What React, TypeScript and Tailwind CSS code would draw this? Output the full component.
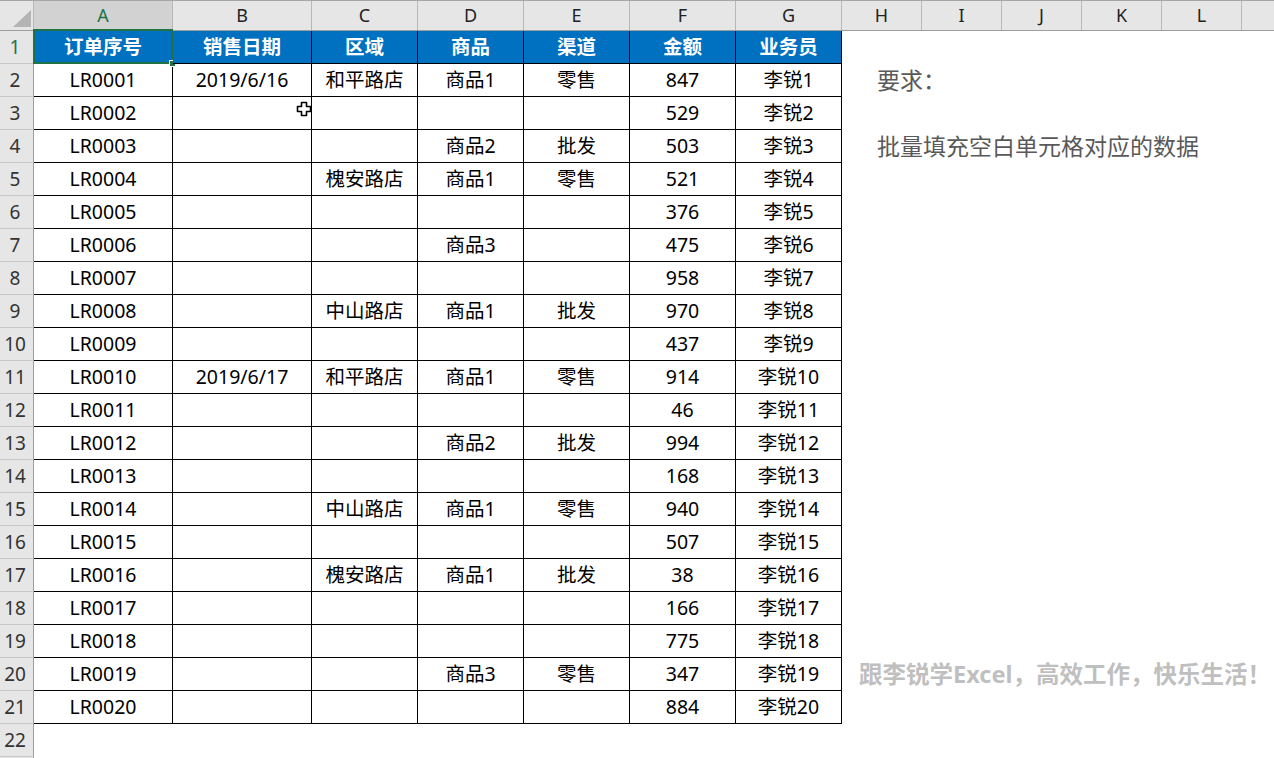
import React from "react";

const FONT = { fontFamily: '"Noto Sans", "Noto Sans CJK SC", sans-serif' };

const widths = [139, 139, 106, 106, 106, 106, 106, 80, 80, 80, 80, 80, 40];
const letters = ["A", "B", "C", "D", "E", "F", "G", "H", "I", "J", "K", "L", ""];

const headers = ["订单序号", "销售日期", "区域", "商品", "渠道", "金额", "业务员"];

const data: string[][] = [
  ["LR0001", "2019/6/16", "和平路店", "商品1", "零售", "847", "李锐1"],
  ["LR0002", "", "", "", "", "529", "李锐2"],
  ["LR0003", "", "", "商品2", "批发", "503", "李锐3"],
  ["LR0004", "", "槐安路店", "商品1", "零售", "521", "李锐4"],
  ["LR0005", "", "", "", "", "376", "李锐5"],
  ["LR0006", "", "", "商品3", "", "475", "李锐6"],
  ["LR0007", "", "", "", "", "958", "李锐7"],
  ["LR0008", "", "中山路店", "商品1", "批发", "970", "李锐8"],
  ["LR0009", "", "", "", "", "437", "李锐9"],
  ["LR0010", "2019/6/17", "和平路店", "商品1", "零售", "914", "李锐10"],
  ["LR0011", "", "", "", "", "46", "李锐11"],
  ["LR0012", "", "", "商品2", "批发", "994", "李锐12"],
  ["LR0013", "", "", "", "", "168", "李锐13"],
  ["LR0014", "", "中山路店", "商品1", "零售", "940", "李锐14"],
  ["LR0015", "", "", "", "", "507", "李锐15"],
  ["LR0016", "", "槐安路店", "商品1", "批发", "38", "李锐16"],
  ["LR0017", "", "", "", "", "166", "李锐17"],
  ["LR0018", "", "", "", "", "775", "李锐18"],
  ["LR0019", "", "", "商品3", "零售", "347", "李锐19"],
  ["LR0020", "", "", "", "", "884", "李锐20"],
];

// notes spilling out of column H
const notes: Record<number, React.ReactNode> = {
  2: <span className="pl-[35px] text-[23px] text-[#595959]">要求：</span>,
  4: <span className="pl-[35px] text-[23px] text-[#595959]">批量填充空白单元格对应的数据</span>,
  20: (
    <span className="pl-[17px] text-[23.5px] font-bold text-[#bfbfbf]">
      跟李锐学Excel，高效工作，快乐生活！
    </span>
  ),
};

function RowHeader({ n }: { n?: number }) {
  return (
    <div
      className={`flex w-[34px] shrink-0 items-center justify-center border-r border-b border-r-[#9e9e9e] border-b-[#c8c8c8] bg-[#e6e6e6] pr-[3px] text-[19px] ${
        n === 1 ? "text-[#217346]" : "text-[#333]"
      }`}
    >
      {n}
    </div>
  );
}

function ColumnHeaders() {
  return (
    <div className="flex h-[31px] border-t border-b border-t-[#a6a6a6] border-b-[#9e9e9e] bg-[#e6e6e6]">
      <div className="relative w-[34px] shrink-0 border-r border-[#b8b8b8]">
        <svg className="absolute left-0 top-0" width="34" height="30">
          <polygon points="13,26 31,26 31,9" fill="#b4b4b4" />
        </svg>
      </div>
      {letters.map((l, i) => (
        <div
          key={i}
          style={{ width: widths[i] }}
          className={`flex shrink-0 items-center justify-center border-r border-[#b8b8b8] text-[18px] ${
            i === 0 ? "bg-[#d2d2d2] text-[#217346]" : "text-[#222]"
          }`}
        >
          {l}
        </div>
      ))}
    </div>
  );
}

function HeaderRow() {
  return (
    <div className="flex h-[33px]">
      <RowHeader n={1} />
      {headers.map((h, i) => (
        <div
          key={i}
          style={{ width: widths[i] }}
          className="relative flex shrink-0 items-center justify-center border-r border-b border-black bg-[#0070c0] text-[19.5px] font-bold text-white"
        >
          {h}
          {i === 0 && (
            <>
              <div className="pointer-events-none absolute -left-px -top-[2px] bottom-[-1px] right-[-1px] border-2 border-[#217346]" />
              <div className="absolute -bottom-[4px] -right-[4px] h-[7px] w-[7px] border border-white bg-[#217346]" />
            </>
          )}
        </div>
      ))}
      <div className="flex-1" />
    </div>
  );
}

function DataRow({ n, cells }: { n: number; cells: string[] }) {
  return (
    <div className="flex h-[33px]">
      <RowHeader n={n} />
      {cells.map((c, i) => (
        <div
          key={i}
          style={{ width: widths[i] }}
          className="flex shrink-0 items-center justify-center border-r border-b border-black text-[19.5px] text-black"
        >
          {c}
        </div>
      ))}
      <div className="flex flex-1 items-center whitespace-nowrap">{notes[n]}</div>
    </div>
  );
}

export default function App() {
  return (
    <div className="relative h-[758px] w-[1274px] overflow-hidden bg-white" style={FONT}>
      <ColumnHeaders />
      <HeaderRow />
      {data.map((r, i) => (
        <DataRow key={i} n={i + 2} cells={r} />
      ))}
      <div className="flex h-[33px]">
        <RowHeader n={22} />
      </div>
      <div className="flex h-[33px]">
        <RowHeader />
      </div>

      {/* fill-handle cursor */}
      <svg className="absolute left-[296px] top-[101px]" width="16" height="16" viewBox="0 0 16 16">
        <path
          d="M5.5 1.5h5v4h4v5h-4v4h-5v-4h-4v-5h4z"
          fill="white"
          stroke="black"
          strokeWidth="1.6"
          strokeLinejoin="round"
        />
      </svg>
    </div>
  );
}
